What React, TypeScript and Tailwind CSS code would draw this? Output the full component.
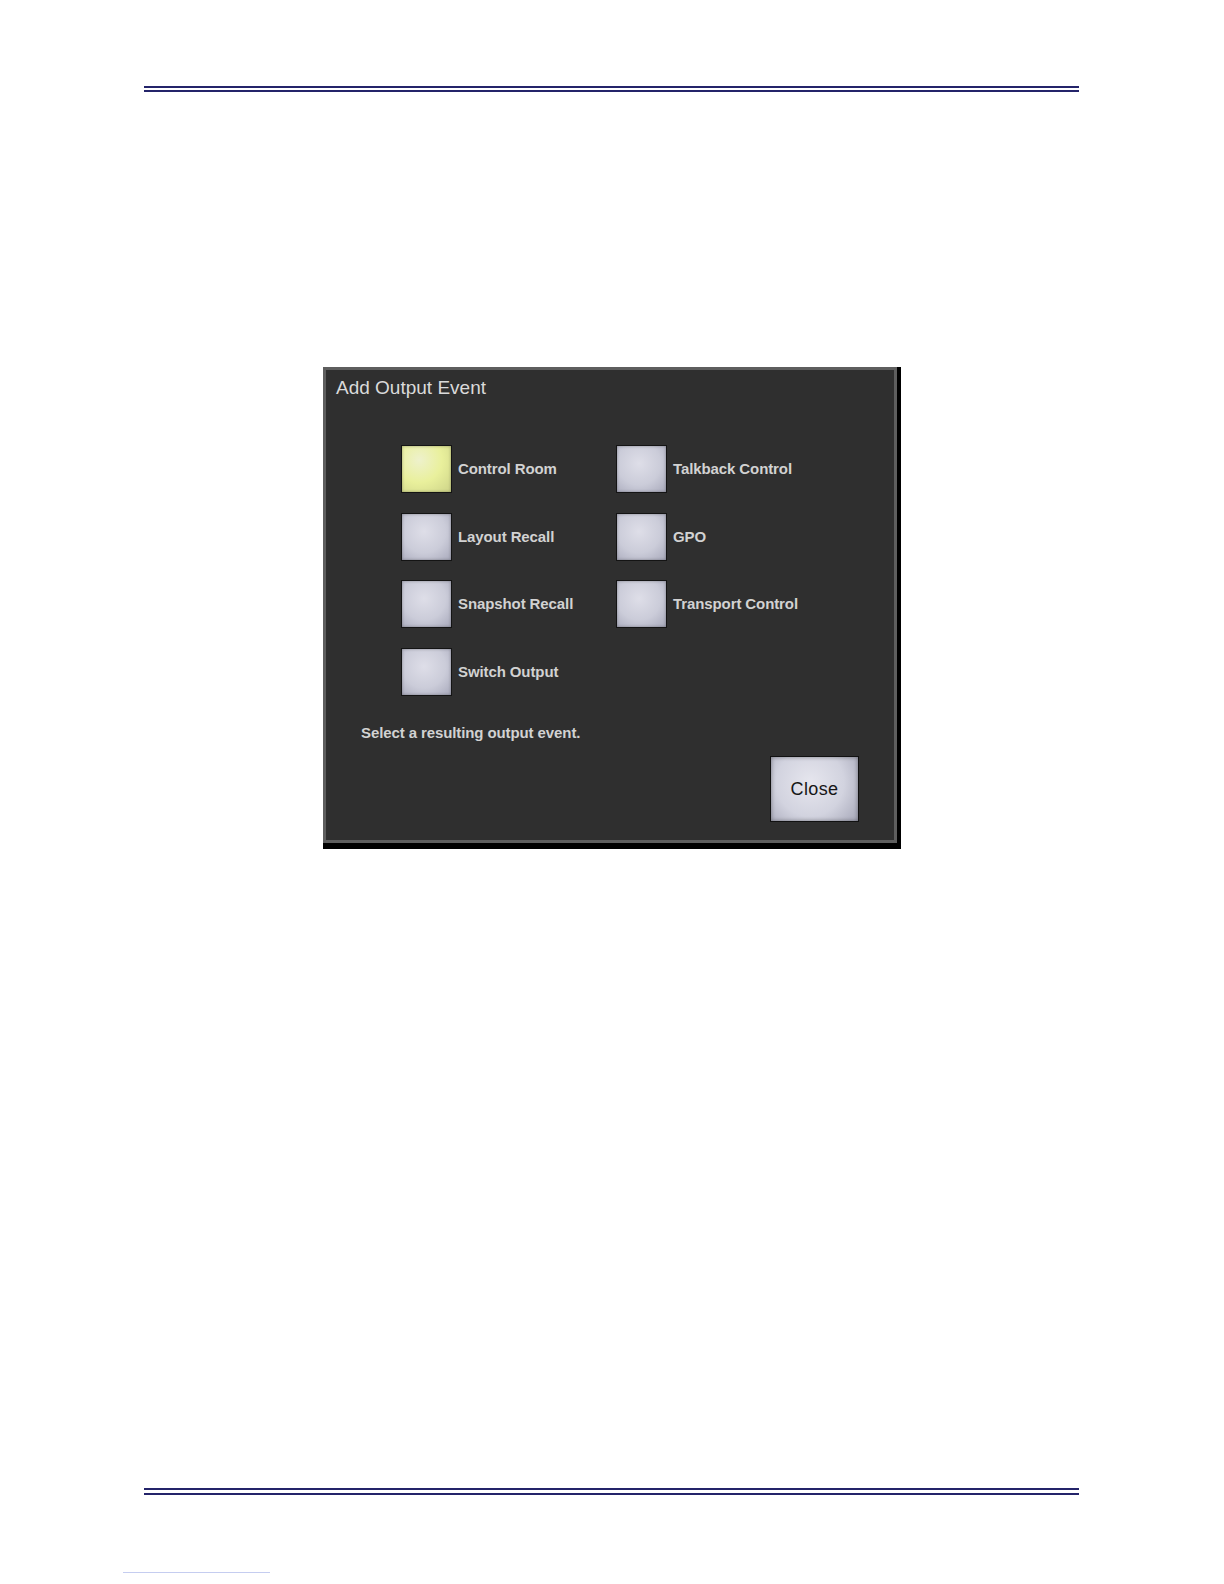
const events: { label: string; selected?: boolean }[][] = [
  [{ label: "Control Room", selected: true }, { label: "Talkback Control" }],
  [{ label: "Layout Recall" }, { label: "GPO" }],
  [{ label: "Snapshot Recall" }, { label: "Transport Control" }],
  [{ label: "Switch Output" }],
];

function EventButton({ label, selected }: { label: string; selected?: boolean }) {
  return (
    <div className="flex items-center gap-[6px]">
      <div
        className={`w-[51px] h-[48px] border border-[#141414] shadow-[inset_0_0_3px_rgba(0,0,0,0.35)] ${
          selected
            ? "bg-[radial-gradient(circle_at_35%_30%,#eef1cc,#e9f09c_50%,#cdd388_100%)]"
            : "bg-[radial-gradient(circle_at_45%_38%,#dedee8,#cbccd9_55%,#a8a9bb_100%)]"
        }`}
      />
      <span className="text-[15px] leading-[18px] font-bold tracking-[-0.1px] text-[#d2d2d2]">
        {label}
      </span>
    </div>
  );
}

export default function App() {
  return (
    <div className="w-[1224px] h-[1584px] bg-white flex flex-col font-['Liberation_Sans',Arial,sans-serif]">
      <div className="mt-[86px] ml-[144px] mr-[145px] h-[2px] bg-[#24246a]" />
      <div className="mt-[2.3px] ml-[144px] mr-[145px] h-[2px] bg-[#24246a]" />

      {/* dialog */}
      <div className="mt-[275px] ml-[323px] self-start bg-black pr-[4px] pb-[6px]">
        <div className="w-[574px] h-[476px] border-[3px] border-[#5e5e5e] bg-[#2f2f2f] flex flex-col">
          <div className="pl-[10px] pt-[8px] text-[19px] leading-[20px] text-[#dadada]">
            Add Output Event
          </div>

          <div className="mt-[47px] ml-[75px] flex flex-col gap-[19.5px]">
            {events.map((row, i) => (
              <div key={i} className="grid grid-cols-[215px_auto]">
                {row.map((ev) => (
                  <EventButton key={ev.label} label={ev.label} selected={ev.selected} />
                ))}
              </div>
            ))}
          </div>

          <div className="mt-[28.5px] ml-[35px] text-[15px] leading-[18px] font-bold tracking-[-0.1px] text-[#d2d2d2]">
            Select a resulting output event.
          </div>

          <div className="mt-[14px] pr-[35px] flex justify-end">
            <div className="w-[89px] h-[66px] border border-[#111] bg-[radial-gradient(circle_at_45%_40%,#e6e6ee,#d2d3df_55%,#a6a7b8_100%)] shadow-[inset_0_0_4px_rgba(0,0,0,0.4)] flex items-center justify-center text-[18px] tracking-[0.4px] text-[#161616]">
              Close
            </div>
          </div>
        </div>
      </div>

      <div className="mt-[639px] ml-[144px] mr-[145px] h-[2px] bg-[#24246a]" />
      <div className="mt-[3px] ml-[144px] mr-[145px] h-[2px] bg-[#24246a]" />

      <div className="mt-[77px] ml-[123px] w-[147px] h-px bg-[#c5cdf0]" />
    </div>
  );
}
